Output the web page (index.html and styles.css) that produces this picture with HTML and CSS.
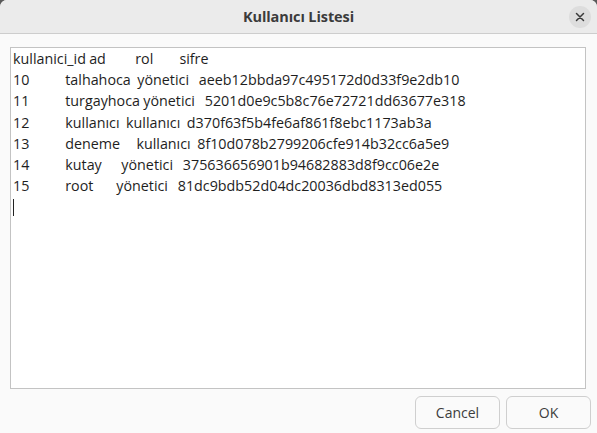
FILE: index.html
```
<!DOCTYPE html>
<html lang="tr">
<head>
<meta charset="utf-8">
<title>Kullanıcı Listesi</title>
<link rel="stylesheet" href="styles.css">
</head>
<body>
<div class="window">
  <header class="titlebar">
    <span></span>
    <h1 class="title">Kullanıcı Listesi</h1>
    <button class="close" aria-label="Kapat">
      <svg width="10" height="10" viewBox="0 0 10 10"><path d="M1.5 1.5 L8.5 8.5 M8.5 1.5 L1.5 8.5" stroke="#3a3a3a" stroke-width="1.5" stroke-linecap="round"/></svg>
    </button>
  </header>
  <main class="content">
    <div class="textarea"><div class="line">kullanici_id ad         rol        sifre</div><div class="line">10           talhahoca  yönetici   aeeb12bbda97c495172d0d33f9e2db10</div><div class="line">11           turgayhoca yönetici   5201d0e9c5b8c76e72721dd63677e318</div><div class="line">12           kullanıcı  kullanıcı  d370f63f5b4fe6af861f8ebc1173ab3a</div><div class="line">13           deneme     kullanıcı  8f10d078b2799206cfe914b32cc6a5e9</div><div class="line">14           kutay      yönetici   375636656901b94682883d8f9cc06e2e</div><div class="line">15           root       yönetici   81dc9bdb52d04dc20036dbd8313ed055</div><div class="line"><span class="caret"></span></div></div>
  </main>
  <footer class="buttons">
    <button class="btn">Cancel</button>
    <button class="btn">OK</button>
  </footer>
</div>
</body>
</html>
```

FILE: styles.css
```
html {
  background: #5a5a5a;
}
body {
  margin: 0;
  font-family: "Open Sans", "Noto Sans", sans-serif;
  color: #222;
}
.window {
  height: 433px;
  background: #fafafa;
  border-radius: 7px 7px 0 0;
  overflow: hidden;
  display: flex;
  flex-direction: column;
}
.titlebar {
  height: 33px;
  flex: none;
  background: #ebebeb;
  border-bottom: 1px solid #cdcdcd;
  display: grid;
  grid-template-columns: 1fr auto 1fr;
  align-items: center;
}
.title {
  margin: 0;
  font-size: 14.5px;
  font-weight: 700;
  color: #3b3b3b;
  letter-spacing: -0.1px;
}
.close {
  justify-self: end;
  margin-right: 6px;
  width: 22px;
  height: 22px;
  border: none;
  border-radius: 50%;
  background: #dddddd;
  padding: 0;
  display: flex;
  align-items: center;
  justify-content: center;
}
.content {
  flex: none;
  padding: 13px 11px 0 10px;
}
.textarea {
  height: 338px;
  background: #fff;
  border: 1px solid #c3c3c3;
  padding: 0 2px 2px;
  font-size: 14.3px;
  line-height: 21.2px;
  word-spacing: -0.45px;
  white-space: pre;
  color: #1e1e1e;
}
.line {
  height: 21.2px;
}
.caret {
  display: inline-block;
  width: 1px;
  height: 17px;
  background: #222;
  vertical-align: -4px;
}
.buttons {
  display: flex;
  justify-content: flex-end;
  gap: 6px;
  padding: 7px 6px 0 0;
}
.btn {
  width: 85px;
  height: 33px;
  border: 1px solid #cfcfcf;
  border-radius: 6px;
  background: #fafafa;
  font-family: "Open Sans", "Noto Sans", sans-serif;
  font-size: 14px;
  color: #3d3d3d;
  padding: 0;
}
```
